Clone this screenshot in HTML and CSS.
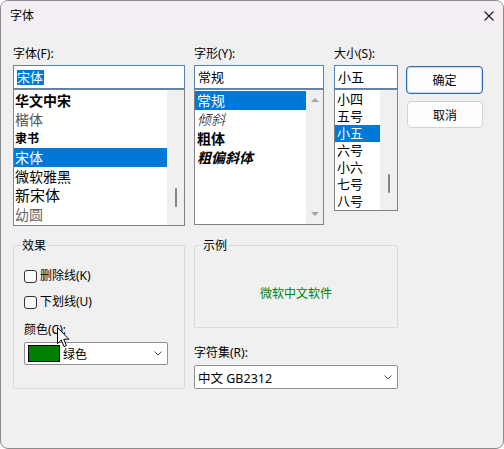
FILE: index.html
```html
<!DOCTYPE html>
<html lang="zh-CN">
<head>
<meta charset="utf-8">
<title>字体</title>
<link rel="stylesheet" href="styles.css">
</head>
<body>
<div class="window">
  <div class="titlebar">
    <span class="title">字体</span>
    <svg class="close" width="10" height="10" viewBox="0 0 10 10"><path d="M0.5 0.5L9.5 9.5M9.5 0.5L0.5 9.5" stroke="#1a1a1a" stroke-width="1.1" fill="none"/></svg>
  </div>
  <div class="content">
    <div class="top">
      <div class="col col-font">
        <div class="label">字体(F):</div>
        <div class="input"><span class="sel">宋体</span></div>
        <div class="list list-font">
          <div class="items">
            <div class="item f-hwzs">华文中宋</div>
            <div class="item f-kai">楷体</div>
            <div class="item f-li">隶书</div>
            <div class="item selected">宋体</div>
            <div class="item">微软雅黑</div>
            <div class="item f-xs">新宋体</div>
            <div class="item f-yy">幼圆</div>
          </div>
          <div class="sb"><div class="thumb thumb-font"></div></div>
        </div>
      </div>
      <div class="col col-style">
        <div class="label">字形(Y):</div>
        <div class="input">常规</div>
        <div class="list list-style">
          <div class="items">
            <div class="item selected">常规</div>
            <div class="item s-italic">倾斜</div>
            <div class="item s-bold">粗体</div>
            <div class="item s-bolditalic">粗偏斜体</div>
          </div>
          <div class="sb sb-arrows"><div class="arrow-up"></div><div class="arrow-down"></div></div>
        </div>
      </div>
      <div class="col col-size">
        <div class="label">大小(S):</div>
        <div class="input">小五</div>
        <div class="list list-size">
          <div class="items">
            <div class="item">小四</div>
            <div class="item">五号</div>
            <div class="item selected">小五</div>
            <div class="item">六号</div>
            <div class="item">小六</div>
            <div class="item">七号</div>
            <div class="item">八号</div>
          </div>
          <div class="sb"><div class="thumb thumb-size"></div></div>
        </div>
      </div>
      <div class="col col-btns">
        <div class="btn btn-default">确定</div>
        <div class="btn btn-cancel">取消</div>
      </div>
    </div>
    <div class="bottom">
      <div class="group group-effects">
        <span class="legend">效果</span>
        <div class="check"><span class="box"></span><span>删除线(K)</span></div>
        <div class="check check-2"><span class="box"></span><span>下划线(U)</span></div>
        <div class="label label-color">颜色(C):</div>
        <div class="combo combo-color">
          <span class="swatch"></span><span class="combo-text">绿色</span>
          <svg class="chev" width="8" height="5" viewBox="0 0 8 5"><polyline points="0.5,0.5 4,4 7.5,0.5" fill="none" stroke="#555" stroke-width="1"/></svg>
        </div>
      </div>
      <div class="col-right">
        <div class="group group-sample">
          <span class="legend">示例</span>
          <span class="sample-text">微软中文软件</span>
        </div>
        <div class="label label-charset">字符集(R):</div>
        <div class="combo combo-charset">
          <span class="combo-text">中文 GB2312</span>
          <svg class="chev" width="8" height="5" viewBox="0 0 8 5"><polyline points="0.5,0.5 4,4 7.5,0.5" fill="none" stroke="#555" stroke-width="1"/></svg>
        </div>
      </div>
    </div>
  </div>
  <svg class="cursor" width="13" height="21" viewBox="0 0 13 21"><path d="M0.5 0.5L0.5 16.5L4.3 13L7 19.6L9.4 18.6L6.8 12.2L11.8 12.2Z" fill="#fff" stroke="#000" stroke-width="1" stroke-linejoin="round"/></svg>
</div>
</body>
</html>
```
FILE: styles.css
```css
* { box-sizing: border-box; }
html, body { margin: 0; padding: 0; background: #ffffff; }
body {
  font-family: "Noto Sans", "Noto Sans CJK SC", sans-serif;
  font-size: 12px;
  color: #000;
}
.window {
  position: relative;
  width: 504px;
  height: 449px;
  border: 1px solid #8a8a8a;
  border-radius: 8px;
  background: #f0f0f0;
  overflow: hidden;
}
.titlebar {
  height: 29px;
  background: #f5eff5;
  display: flex;
  align-items: center;
  padding: 0 9px 0 9px;
}
.title { font-size: 12px; line-height: 16px; }
.close { margin-left: auto; }
.content { padding: 16px 0 0 12px; }
.top { display: flex; align-items: flex-start; }
.col { display: flex; flex-direction: column; }
.col-font { width: 172px; }
.col-style { width: 130px; margin-left: 9px; }
.col-size { width: 64px; margin-left: 10px; }
.col-btns { width: 77px; margin-left: 8px; margin-top: 20px; }
.label { font-size: 12px; line-height: 16px; height: 16px; margin-bottom: 3px; }
.input {
  height: 24px;
  border: 1px solid #5583b3;
  background: #fff;
  padding-left: 3px;
  font-size: 13px;
  display: flex;
  align-items: center;
  line-height: 16px;
}
.sel { background: #0078d7; color: #fff; line-height: 15px; padding: 0 1px 0 0; }
.list {
  border: 1px solid #828282;
  background: #fff;
  display: flex;
  overflow: hidden;
}
.list-font { height: 137px; }
.list-style { height: 136px; }
.list-size { height: 122px; }
.items { flex: 1; padding-top: 1px; }
.item { height: 19px; line-height: 19px; font-size: 14px; padding-left: 1px; white-space: nowrap; }
.list-style .item { padding-left: 2px; }
.list-size .item { height: 17px; line-height: 17px; font-size: 13px; padding-left: 2px; }
.item.selected { background: #0078d7; color: #fff; }
.f-hwzs { font-weight: 700; }
.f-kai { color: #555; }
.f-li { font-weight: 700; font-size: 12px; }
.f-xs { font-size: 15px; }
.f-yy { color: #666; }
.s-italic { font-style: italic; font-weight: 300; }
.s-bold { font-weight: 700; }
.s-bolditalic { font-weight: 700; font-style: italic; }
.sb { width: 17px; background: #f0f0f0; display: flex; flex-direction: column; align-items: center; }
.thumb { width: 2px; height: 19px; background: #858585; border-radius: 1px; }
.thumb-font { margin-top: 98px; }
.thumb-size { margin-top: 84px; }
.sb-arrows { justify-content: space-between; padding: 8px 0; }
.arrow-up { width: 0; height: 0; border-left: 4px solid transparent; border-right: 4px solid transparent; border-bottom: 4px solid #a3a3a3; }
.arrow-down { width: 0; height: 0; border-left: 4px solid transparent; border-right: 4px solid transparent; border-top: 4px solid #a3a3a3; }
.btn {
  display: flex;
  align-items: center;
  justify-content: center;
  background: #fdfdfd;
  border-radius: 4px;
  font-size: 12px;
}
.btn-default { height: 28px; border: 1px solid #2f67a6; box-shadow: inset 0 0 0 1px #c6d9ee; }
.btn-cancel { height: 27px; width: 76px; margin: 7px 0 0 1px; border: 1px solid #d2d2d2; }
.bottom { display: flex; margin-top: 19px; align-items: flex-start; }
.group {
  position: relative;
  border: 1px solid #dadada;
  border-radius: 2px;
}
.legend {
  position: absolute;
  top: -8px;
  left: 7px;
  padding: 0 1px;
  background: #f0f0f0;
  font-size: 12px;
  line-height: 16px;
}
.group-effects {
  width: 172px;
  height: 144px;
  padding: 22px 0 0 10px;
  display: flex;
  flex-direction: column;
}
.check { display: flex; align-items: center; height: 16px; line-height: 16px; gap: 3px; }
.check-2 { margin-top: 10px; }
.box { width: 13px; height: 13px; border: 1px solid #333; border-radius: 3px; background: #fafafa; }
.label-color { margin-top: 12px; margin-bottom: 4px; }
.combo {
  display: flex;
  align-items: center;
  background: #fff;
  border: 1px solid #8f8f8f;
  border-radius: 2px;
  font-size: 12px;
}
.combo-color { width: 144px; height: 23px; padding-left: 3px; }
.swatch { width: 32px; height: 17px; border: 1px solid #000; background: #008000; }
.combo-color .combo-text { margin-left: 3px; }
.chev { margin-left: auto; margin-right: 5px; }
.col-right { width: 204px; margin-left: 9px; display: flex; flex-direction: column; }
.group-sample {
  height: 83px;
  display: flex;
  justify-content: center;
  align-items: center;
  padding-top: 14px;
}
.sample-text { color: #008000; font-size: 12px; line-height: 16px; }
.label-charset { margin-top: 17px; margin-bottom: 4px; }
.combo-charset { height: 24px; padding-left: 3px; font-size: 12.5px; }
.cursor { position: absolute; left: 56px; top: 326px; }
```
